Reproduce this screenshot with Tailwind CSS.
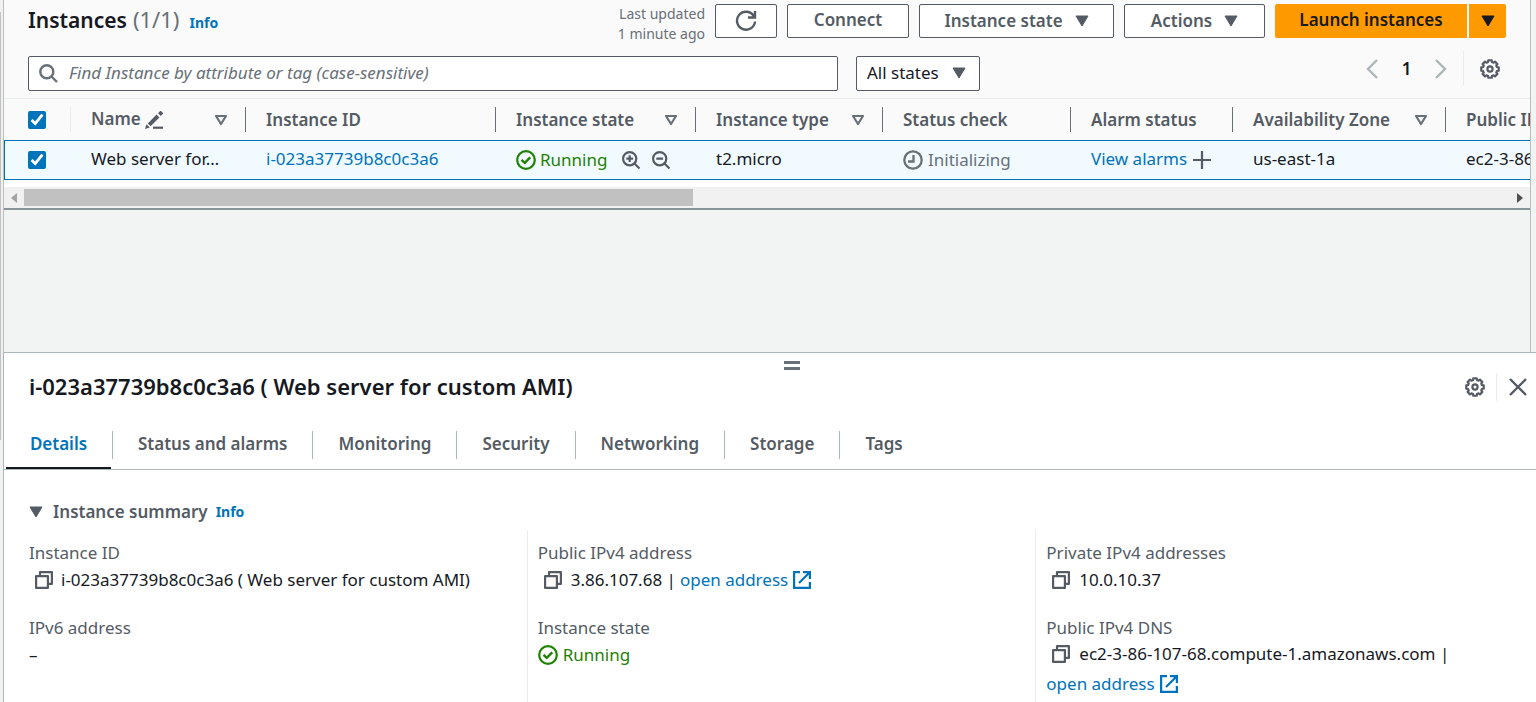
<!DOCTYPE html>
<html lang="en">
<head>
<meta charset="utf-8">
<title>Instances</title>
<script src="https://cdn.jsdelivr.net/npm/@tailwindcss/browser@4"></script>
</head>
<body class="flex h-screen overflow-hidden bg-[#f2f3f3] font-['Noto_Sans','Open_Sans',sans-serif] text-[17px] leading-[22px] text-[#16191f]">
<svg class="hidden" aria-hidden="true">
  <symbol id="caret" viewBox="0 0 14 12"><path d="M1 1h12L7 11z" fill="currentColor" stroke="currentColor" stroke-linejoin="round"/></symbol>
  <symbol id="caret-o" viewBox="0 0 14 12"><path d="M2 2h10L7 10z" fill="none" stroke="#687078" stroke-width="2.2" stroke-linejoin="round"/></symbol>
  <symbol id="gear" viewBox="0 0 20 20"><g fill="none" stroke="currentColor"><path stroke-width="2.2" stroke-linejoin="round" d="M18.740 8.300V11.700L16.920 11.980 16.300 13.490 17.380 14.980 14.980 17.380 13.490 16.300 11.980 16.920 11.700 18.740H8.300L8.020 16.920 6.510 16.300 5.020 17.380 2.620 14.980 3.700 13.490 3.080 11.980 1.260 11.700V8.300L3.080 8.020 3.700 6.510 2.620 5.020 5.020 2.620 6.510 3.700 8.020 3.080 8.300 1.260H11.700L11.980 3.080 13.490 3.700 14.980 2.620 17.380 5.020 16.300 6.510 16.920 8.020z"/><circle cx="10" cy="10" r="2.600" stroke-width="2.2"/></g></symbol>
  <symbol id="check" viewBox="0 0 20 20"><g fill="none" stroke="currentColor" stroke-width="2.2"><circle cx="10" cy="10" r="8.800"/><path d="M5.500 9.800l3.200 3 5.600-5.400" stroke-width="2.400"/></g></symbol>
  <symbol id="copy" viewBox="0 0 18 18"><g fill="none" stroke="currentColor" stroke-width="2.2" stroke-linejoin="round"><path d="M1.100 5.100h11.800v11.800H1.100z"/><path d="M5 5V1.100h11.900v11.800h-4"/></g></symbol>
  <symbol id="ext" viewBox="0 0 18 18"><g fill="none" stroke="currentColor" stroke-width="2.2"><path d="M7 1.100H1.100v15.800h15.800V11M10 1.100h6.900V8M16.500 1.500 6 12"/></g></symbol>
</svg>
<div class="w-[3px] shrink-0 bg-[#f1f1f1] pt-3"><div class="h-[428px] w-px bg-[#c1c1c1]"></div></div>
<div class="flex min-w-0 flex-1 flex-col">
  <main class="mr-[5px] flex-1 border-x border-[#b5bfbf]">
    <section class="border-b-2 border-[#879596] bg-[#fafafa]">
      <header class="flex items-start px-6 pt-1">
        <h1 class="flex flex-1 items-baseline text-[21px] leading-[30px] font-semibold">Instances<span class="ml-[6px] text-[22px] font-normal text-[#687078]">(1/1)</span><a href="#" class="ml-[10px] text-[14px] font-bold text-[#0073bb]">Info</a></h1>
        <p class="mr-[10px] text-right text-[14px] leading-5 text-[#687078]">Last updated<br>1 minute ago</p>
        <div class="flex gap-[10px] font-semibold text-[#545b64]">
          <button aria-label="Refresh" class="flex h-[34px] w-[62px] items-center justify-center rounded-xs border border-[#545b64] bg-white"><svg class="size-[22px]" viewBox="0 0 22 22" fill="none" stroke="currentColor" stroke-width="2.400"><path d="M19 6.500A9 9 0 1 0 20 11.500M20 1v6.500h-7"/></svg></button>
          <button class="h-[34px] w-[122px] rounded-xs border border-[#545b64] bg-white pb-[2px]">Connect</button>
          <button class="flex h-[34px] w-[195px] items-center justify-center gap-3 rounded-xs border border-[#545b64] bg-white pb-px">Instance state<svg class="h-3 w-[14px]"><use href="#caret"/></svg></button>
          <button class="flex h-[34px] w-[141px] items-center justify-center gap-3 rounded-xs border border-[#545b64] bg-white pb-px">Actions<svg class="h-3 w-[14px]"><use href="#caret"/></svg></button>
          <div class="flex gap-[2px] text-[#16191f]">
            <button class="h-[34px] w-[192px] rounded-l-xs bg-[#ff9900] pb-[2px]">Launch instances</button>
            <button aria-label="More launch options" class="flex h-[34px] w-[37px] items-center justify-center rounded-r-xs bg-[#ff9900]"><svg class="h-3 w-[14px]"><use href="#caret"/></svg></button>
          </div>
        </div>
      </header>
      <div class="flex items-start px-6 pt-[7px]">
        <label class="mt-[5px] flex h-[35px] w-[810px] items-center rounded-xs border border-[#545b64] bg-white pl-[10px]">
          <svg class="mr-[11px] size-[19px] text-[#687078]" viewBox="0 0 19 19" fill="none" stroke="currentColor" stroke-width="2.400"><circle cx="7.800" cy="7.800" r="6.500"/><path d="M12.500 12.500l5.500 5.500"/></svg>
          <input aria-label="Find instance" class="flex-1 bg-transparent pb-[2px] outline-none placeholder:text-[#687078] placeholder:italic" placeholder="Find Instance by attribute or tag (case-sensitive)">
        </label>
        <div class="relative mt-[5px] ml-[18px]">
          <select aria-label="State filter" class="h-[35px] w-[124px] appearance-none rounded-xs border border-[#545b64] bg-white pb-[2px] pl-[10px]"><option>All states</option></select>
          <svg class="pointer-events-none absolute top-[11px] right-[14px] h-3 w-[14px] text-[#545b64]"><use href="#caret"/></svg>
        </div>
        <div class="mr-[6px] ml-auto flex items-center">
          <button aria-label="Previous page" class="text-[#aab7b8]"><svg class="h-5 w-3" viewBox="0 0 12 20" fill="none" stroke="currentColor" stroke-width="2.400"><path d="M11 1 2 10l9 9"/></svg></button>
          <span class="w-[57px] text-center font-semibold">1</span>
          <button aria-label="Next page" class="text-[#aab7b8]"><svg class="h-5 w-3" viewBox="0 0 12 20" fill="none" stroke="currentColor" stroke-width="2.400"><path d="M1 1l9 9-9 9"/></svg></button>
          <button aria-label="Preferences" class="ml-4 flex h-[35px] items-center border-l border-[#eaeded] pl-4 text-[#545b64]"><svg class="size-5"><use href="#gear"/></svg></button>
        </div>
      </div>
      <div class="mt-[7px] overflow-hidden border-t border-[#eaeded]">
        <table class="w-[1700px] table-fixed border-separate border-spacing-0 text-left whitespace-nowrap">
          <colgroup><col class="w-[67px]"><col class="w-[175px]"><col class="w-[250px]"><col class="w-[200px]"><col class="w-[187px]"><col class="w-[188px]"><col class="w-[162px]"><col class="w-[213px]"><col></colgroup>
          <thead class="text-[#545b64]">
            <tr class="h-[41px] *:p-0 *:font-semibold">
              <th><div class="flex h-[25px] items-center border-r border-[#eaeded] pl-6"><input type="checkbox" checked aria-label="Select all" class="size-[18px] accent-[#0073bb]"></div></th>
              <th><div class="flex h-[25px] items-center border-r border-[#687078] pr-[17px] pl-5"><span class="pb-[2px]">Name</span><svg class="ml-1 size-[18px]" viewBox="0 0 18 18" fill="none" stroke="currentColor"><path d="M0 18l1.400-4.800 3.400 3.400z" fill="currentColor" stroke="none"/><path stroke-width="4" d="M4.200 13.800 13 5M14.400 3.600 17 1"/><path stroke-width="2.200" d="M8 16.700h10"/></svg><svg class="ml-auto h-3 w-[14px]"><use href="#caret-o"/></svg></div></th>
              <th><div class="flex h-[25px] items-center border-r border-[#687078] pl-5">Instance ID</div></th>
              <th><div class="flex h-[25px] items-center justify-between border-r border-[#687078] pr-[17px] pl-5">Instance state<svg class="h-3 w-[14px]"><use href="#caret-o"/></svg></div></th>
              <th><div class="flex h-[25px] items-center justify-between border-r border-[#687078] pr-[17px] pl-5">Instance type<svg class="h-3 w-[14px]"><use href="#caret-o"/></svg></div></th>
              <th><div class="flex h-[25px] items-center border-r border-[#687078] pl-5">Status check</div></th>
              <th><div class="flex h-[25px] items-center border-r border-[#687078] pl-5">Alarm status</div></th>
              <th><div class="flex h-[25px] items-center justify-between border-r border-[#687078] pr-[17px] pl-5">Availability Zone<svg class="h-3 w-[14px]"><use href="#caret-o"/></svg></div></th>
              <th><div class="pl-5">Public IPv4 DNS</div></th>
            </tr>
          </thead>
          <tbody>
            <tr class="h-10 bg-[#f1faff] *:border-y *:border-[#0073bb] *:p-0">
              <td class="border-l"><div class="flex pl-[23px]"><input type="checkbox" checked aria-label="Select Web server for custom AMI" class="size-[18px] accent-[#0073bb]"></div></td>
              <td><div class="pb-[2px] pl-5">Web server for…</div></td>
              <td><div class="pb-[2px] pl-5"><a href="#" class="text-[#0073bb]">i-023a37739b8c0c3a6</a></div></td>
              <td><div class="flex items-center pl-5 text-[#1d8102]"><svg class="mr-1 size-5"><use href="#check"/></svg>Running
                <button aria-label="Include in filter" class="ml-[15px] text-[#545b64]"><svg class="size-[18px]" viewBox="0 0 18 18" fill="none" stroke="currentColor" stroke-width="2.200"><circle cx="7.700" cy="7.700" r="6.600"/><path d="M12.500 12.500l5 5M4.300 7.700h6.800M7.700 4.300v6.800"/></svg></button>
                <button aria-label="Exclude from filter" class="ml-3 text-[#545b64]"><svg class="size-[18px]" viewBox="0 0 18 18" fill="none" stroke="currentColor" stroke-width="2.200"><circle cx="7.700" cy="7.700" r="6.600"/><path d="M12.500 12.500l5 5M4.300 7.700h6.800"/></svg></button></div></td>
              <td><div class="pb-[2px] pl-5">t2.micro</div></td>
              <td><div class="flex items-center pl-5 text-[#687078]"><svg class="mr-[5px] size-5" viewBox="0 0 20 20" fill="none" stroke="currentColor" stroke-width="2.300"><circle cx="10" cy="10" r="8.700"/><path d="M10.500 5v6.500H5"/></svg>Initializing</div></td>
              <td><div class="flex items-center pl-5"><a href="#" class="pb-[2px] text-[#0073bb]">View alarms</a><button aria-label="Add alarm" class="ml-[6px] text-[#545b64]"><svg class="size-[18px]" viewBox="0 0 18 18" stroke="currentColor" stroke-width="2.200"><path d="M9 0v18M0 9h18"/></svg></button></div></td>
              <td><div class="pb-[2px] pl-5">us-east-1a</div></td>
              <td><div class="pb-[2px] pl-5">ec2-3-86-107-68.compute-1.amazonaws.com</div></td>
            </tr>
          </tbody>
        </table>
      </div>
      <div class="border-t-[7px] border-white bg-[#f1f1f1]">
        <div class="flex h-[21px] items-center justify-between px-[7px]">
          <svg class="h-[10px] w-[6px] text-[#a3a3a3]" viewBox="0 0 6 10"><path d="M6 0v10L0 5z" fill="currentColor"/></svg>
          <div class="mx-[7px] flex-1"><div class="h-[17px] w-[45%] bg-[#c1c1c1]"></div></div>
          <svg class="h-[10px] w-[6px] text-[#505050]" viewBox="0 0 6 10"><path d="M0 0v10l6-5z" fill="currentColor"/></svg>
        </div>
      </div>
    </section>
  </main>
  <section class="h-[350px] shrink-0 overflow-hidden border-t border-l border-[#aab7b8] bg-white">
    <div class="flex h-[17px] items-end justify-center pl-[43px]"><button aria-label="Resize panel" class="h-[9px] w-4 border-y-3 border-[#687078]"></button></div>
    <header class="flex h-[34px] items-center justify-between pr-[9px] pl-[25px]">
      <h2 class="pb-[2px] text-[22px] leading-7 font-semibold">i-023a37739b8c0c3a6 ( Web server for custom AMI)</h2>
      <div class="flex items-center text-[#545b64]">
        <button aria-label="Panel preferences"><svg class="size-5"><use href="#gear"/></svg></button>
        <button aria-label="Close panel" class="ml-[11px] flex h-7 items-center border-l border-[#eaeded] pl-3"><svg class="size-[18px]" viewBox="0 0 18 18" stroke="currentColor" stroke-width="2.400"><path d="M1 1l16 16M17 1 1 17"/></svg></button>
      </div>
    </header>
    <div role="tablist" class="mt-[17px] flex h-[49px] border-b border-[#aab7b8] pl-[2px] font-semibold text-[#545b64]">
      <button role="tab" aria-selected="true" class="mr-px w-[105px] border-b-2 border-[#16191f] text-[#0073bb]">Details</button>
      <span class="mt-[10px] h-7 w-px bg-[#aab7b8]"></span>
      <button role="tab" class="border-b-2 border-transparent px-[25px]">Status and alarms</button>
      <span class="mt-[10px] h-7 w-px bg-[#aab7b8]"></span>
      <button role="tab" class="border-b-2 border-transparent px-[25px]">Monitoring</button>
      <span class="mt-[10px] h-7 w-px bg-[#aab7b8]"></span>
      <button role="tab" class="border-b-2 border-transparent px-[25px]">Security</button>
      <span class="mt-[10px] h-7 w-px bg-[#aab7b8]"></span>
      <button role="tab" class="border-b-2 border-transparent px-[25px]">Networking</button>
      <span class="mt-[10px] h-7 w-px bg-[#aab7b8]"></span>
      <button role="tab" class="border-b-2 border-transparent px-[25px]">Storage</button>
      <span class="mt-[10px] h-7 w-px bg-[#aab7b8]"></span>
      <button role="tab" class="border-b-2 border-transparent px-[25px]">Tags</button>
    </div>
    <div role="tabpanel" class="pt-[31px]">
      <h3 class="flex items-center pl-[25px] font-semibold text-[#545b64]"><svg class="mr-[10px] h-3 w-[14px]"><use href="#caret"/></svg>Instance summary<a href="#" class="ml-2 text-[14px] font-bold text-[#0073bb]">Info</a></h3>
      <div class="mt-[7px] -mr-2 ml-[14px] grid grid-cols-3">
        <dl class="pt-3 pl-[11px]">
          <dt class="text-[#545b64]">Instance ID</dt>
          <dd class="flex items-center leading-[32px]"><button aria-label="Copy instance ID" class="mr-2 ml-[6px] text-[#545b64]"><svg class="size-[18px]"><use href="#copy"/></svg></button>i-023a37739b8c0c3a6 ( Web server for custom AMI)</dd>
          <dt class="mt-[21px] text-[#545b64]">IPv6 address</dt>
          <dd class="leading-[32px]">–</dd>
        </dl>
        <dl class="h-[180px] border-l border-[#eaeded] pt-3 pl-[10px]">
          <dt class="text-[#545b64]">Public IPv4 address</dt>
          <dd class="flex items-center leading-[32px]"><button aria-label="Copy public IPv4 address" class="mr-[9px] ml-[6px] text-[#545b64]"><svg class="size-[18px]"><use href="#copy"/></svg></button>3.86.107.68 |<a href="#" class="ml-1 flex items-center gap-[5px] text-[#0073bb]">open address<svg class="size-[18px]"><use href="#ext"/></svg></a></dd>
          <dt class="mt-[21px] text-[#545b64]">Instance state</dt>
          <dd class="flex items-center leading-[32px] text-[#1d8102]"><svg class="mr-[5px] size-5"><use href="#check"/></svg>Running</dd>
        </dl>
        <dl class="h-[180px] border-l border-[#eaeded] pt-3 pl-[10px]">
          <dt class="text-[#545b64]">Private IPv4 addresses</dt>
          <dd class="flex items-center leading-[32px]"><button aria-label="Copy private IPv4 address" class="mr-[9px] ml-[6px] text-[#545b64]"><svg class="size-[18px]"><use href="#copy"/></svg></button>10.0.10.37</dd>
          <dt class="mt-[21px] text-[#545b64]">Public IPv4 DNS</dt>
          <dd class="flex flex-wrap items-center leading-[30px]"><button aria-label="Copy public IPv4 DNS" class="mr-[9px] ml-[6px] text-[#545b64]"><svg class="size-[18px]"><use href="#copy"/></svg></button><span class="mr-1">ec2-3-86-107-68.compute-1.amazonaws.com |</span><a href="#" class="flex items-center gap-[5px] text-[#0073bb]">open address<svg class="size-[18px]"><use href="#ext"/></svg></a></dd>
        </dl>
      </div>
    </div>
  </section>
</div>
</body>
</html>
